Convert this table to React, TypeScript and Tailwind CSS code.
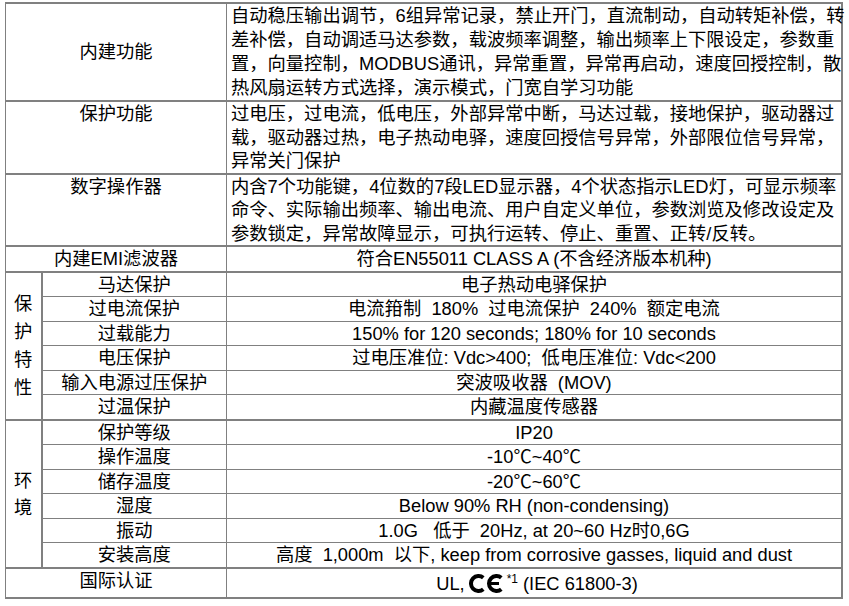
import React from 'react';

// Spec sheet table: inverter built-in functions, protection and environment.
const LINE = 'border border-[#808080]';

const BUILTIN = [
  '自动稳压输出调节，6组异常记录，禁止开门，直流制动，自动转矩补偿，转',
  '差补偿，自动调适马达参数，载波频率调整，输出频率上下限设定，参数重',
  '置，向量控制，MODBUS通讯，异常重置，异常再启动，速度回授控制，散',
  '热风扇运转方式选择，演示模式，门宽自学习功能',
];

const PROTECT_FN = [
  '过电压，过电流，低电压，外部异常中断，马达过载，接地保护，驱动器过',
  '载，驱动器过热，电子热动电驿，速度回授信号异常，外部限位信号异常，',
  '异常关门保护',
];

const KEYPAD = [
  '内含7个功能键，4位数的7段LED显示器，4个状态指示LED灯，可显示频率',
  '命令、实际输出频率、输出电流、用户自定义单位，参数浏览及修改设定及',
  '参数锁定，异常故障显示，可执行运转、停止、重置、正转/反转。',
];

const PROTECT: [string, string][] = [
  ['马达保护', '电子热动电驿保护'],
  ['过电流保护', '电流箝制  180%  过电流保护  240%  额定电流'],
  ['过载能力', '150% for 120 seconds; 180% for 10 seconds'],
  ['电压保护', '过电压准位: Vdc>400;  低电压准位: Vdc<200'],
  ['输入电源过压保护', '突波吸收器  (MOV)'],
  ['过温保护', '内藏温度传感器'],
];

const ENV: [string, string][] = [
  ['保护等级', 'IP20'],
  ['操作温度', '-10℃~40℃'],
  ['储存温度', '-20℃~60℃'],
  ['湿度', 'Below 90% RH (non-condensing)'],
  ['振动', '1.0G   低于  20Hz, at 20~60 Hz时0,6G'],
  ['安装高度', '高度  1,000m  以下, keep from corrosive gasses, liquid and dust'],
];

function Lines({lines}: {lines: string[]}) {
  return (
    <>
      {lines.map((l) => (
        <div key={l} className="whitespace-nowrap">
          {l}
        </div>
      ))}
    </>
  );
}

function CeMark() {
  return (
    <svg viewBox="0 0 37 19" className="ml-[4px] mr-[1px] inline-block h-[19px] w-[37px] align-[-4px]" aria-hidden="true">
      <path d="M14.3 3.75 A7.5 7.5 0 1 0 14.3 15.25" fill="none" stroke="#000" strokeWidth="4" />
      <path d="M32.3 3.75 A7.5 7.5 0 1 0 32.3 15.25" fill="none" stroke="#000" strokeWidth="4" />
      <rect x="19.5" y="8" width="10.5" height="3" fill="#000" />
    </svg>
  );
}

function Group({title, rows, leading}: {title: string[]; rows: [string, string][]; leading: string}) {
  return (
    <>
      {rows.map(([label, value], i) => {
        const last = i === rows.length - 1;
        return (
          <tr key={label}>
            {i === 0 && (
              <td rowSpan={rows.length} className={`${LINE} border-r-2 border-b-2 p-0 text-center align-middle ${leading}`}>
                {title.map((c) => (
                  <div key={c}>{c}</div>
                ))}
              </td>
            )}
            <td className={`${LINE} p-0 text-center align-middle ${last ? 'border-b-2' : ''}`}>{label}</td>
            <td className={`${LINE} whitespace-pre p-0 text-center align-middle ${last ? 'border-b-2' : ''}`}>{value}</td>
          </tr>
        );
      })}
    </>
  );
}

export default function App() {
  return (
    <div className="min-h-screen bg-white pt-[2px] pl-[5px] font-['Liberation_Sans','Noto_Sans_CJK_SC',sans-serif] text-[18.3px] leading-[23.5px] text-black">
      <table className="w-[838px] table-fixed border-collapse border-t-2 border-r-2 border-b-2 border-l border-[#808080]">
        <colgroup>
          <col className="w-[36px]" />
          <col className="w-[185px]" />
          <col />
        </colgroup>
        <tbody>
          <tr>
            <td colSpan={2} className={`${LINE} border-b-2 p-0 text-center align-middle`}>
              内建功能
            </td>
            <td className={`${LINE} border-b-2 py-0 pr-0 pl-[4px] align-top leading-[24px]`}>
              <Lines lines={BUILTIN} />
            </td>
          </tr>
          <tr>
            <td colSpan={2} className={`${LINE} border-b-2 p-0 text-center align-top`}>
              保护功能
            </td>
            <td className={`${LINE} border-b-2 py-0 pr-0 pl-[4px] align-top`}>
              <Lines lines={PROTECT_FN} />
            </td>
          </tr>
          <tr>
            <td colSpan={2} className={`${LINE} border-b-2 p-0 text-center align-top`}>
              数字操作器
            </td>
            <td className={`${LINE} border-b-2 py-0 pr-0 pl-[4px] align-top`}>
              <Lines lines={KEYPAD} />
            </td>
          </tr>
          <tr>
            <td colSpan={2} className={`${LINE} border-b-2 p-0 text-center align-middle`}>
              内建EMI滤波器
            </td>
            <td className={`${LINE} border-b-2 p-0 text-center align-middle`}>符合EN55011 CLASS A (不含经济版本机种)</td>
          </tr>
          <Group title={['保', '护', '特', '性']} rows={PROTECT} leading="leading-[28px]" />
          <Group title={['环', '境']} rows={ENV} leading="leading-[27px]" />
          <tr>
            <td colSpan={2} className={`${LINE} h-[30px] p-0 text-center align-top`}>
              国际认证
            </td>
            <td className={`${LINE} h-[30px] p-0 pt-[3px] text-center align-top`}>
              <span className="inline-flex items-center whitespace-nowrap pl-[6px]">
                <span>UL,</span>
                <CeMark />
                <span className="mr-[5px] -mt-[9px] text-[12px] leading-none">*1</span>
                <span>(IEC 61800-3)</span>
              </span>
            </td>
          </tr>
        </tbody>
      </table>
    </div>
  );
}
